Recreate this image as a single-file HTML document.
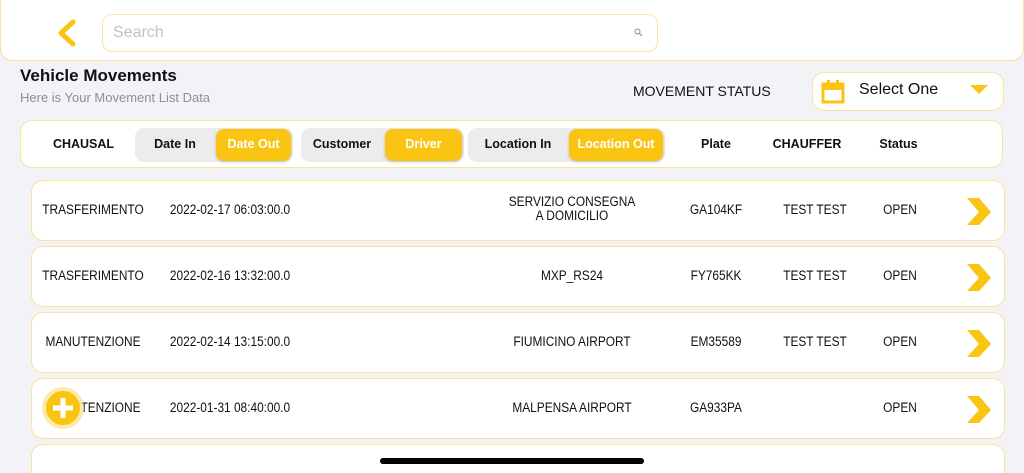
<!DOCTYPE html>
<html style="width:1024px;height:473px;overflow:hidden"><head><meta charset="utf-8"><style>
*{box-sizing:border-box;margin:0;padding:0}
body{width:1024px;height:473px;background:#f2f2f7;font-family:"Liberation Sans",sans-serif;position:relative;overflow:hidden;color:#111}
.a{position:absolute}
.box{position:absolute;background:#fff;border:1.5px solid #fbe39a;border-radius:12px}
.hd{font-size:12.5px;font-weight:bold;position:absolute;top:0;height:100%;display:flex;align-items:center;justify-content:center}
.grp{position:absolute;top:7px;height:34px;background:#ececec;border-radius:9px}
.on{position:absolute;top:8px;height:32px;background:#f9c412;color:#fff;border-radius:8px;box-shadow:0 1px 3px rgba(0,0,0,.2)}
.c{position:absolute;font-size:13.5px;text-align:center;transform:translateX(-50%) scaleX(.88);white-space:nowrap}
</style></head><body>
<div class="box" style="left:0;top:-2px;width:1024px;height:63px;border-radius:0 0 12px 12px"></div>
<svg class="a" style="left:54px;top:18px" width="24" height="30"><path d="M19 4 L7 15 L19 26" fill="none" stroke="#f9c412" stroke-width="5" stroke-linecap="round" stroke-linejoin="round"/></svg>
<div class="box" style="left:102px;top:14px;width:556px;height:38px;border-radius:10px"></div>
<div class="a" style="left:113px;top:24px;font-size:16px;color:#c2c2c6">Search</div>
<svg class="a" style="left:634px;top:28px" width="9" height="9"><circle cx="3.5" cy="3.5" r="2.5" fill="none" stroke="#888" stroke-width="1"/><path d="M5.5 5.5 L8 8" stroke="#888"/></svg>
<div class="a" style="left:20px;top:66px;font-size:17px;font-weight:bold">Vehicle Movements</div>
<div class="a" style="left:20px;top:90px;font-size:13px;color:#8e8e93">Here is Your Movement List Data</div>
<div class="a" style="left:633px;top:83px;font-size:14px">MOVEMENT STATUS</div>
<div class="box" style="left:812px;top:72px;width:192px;height:39px"></div>
<svg class="a" style="left:821px;top:79px" width="24" height="26"><rect x="2" y="5" width="20" height="18" fill="none" stroke="#f9c412" stroke-width="3"/><rect x="2" y="5" width="20" height="6" fill="#f9c412"/><rect x="6" y="1" width="3" height="6" fill="#f9c412"/><rect x="15" y="1" width="3" height="6" fill="#f9c412"/></svg>
<div class="a" style="left:859px;top:81px;font-size:16px">Select One</div>
<svg class="a" style="left:970px;top:85px" width="18" height="10"><path d="M0 0 H18 L9 9Z" fill="#f9c412"/></svg>
<div class="box" style="left:20px;top:120px;width:983px;height:48px">
<div class="hd" style="left:20px;width:85px">CHAUSAL</div>
<div class="grp" style="left:114px;width:158px"></div>
<div class="hd" style="left:114px;width:80px">Date In</div>
<div class="on" style="left:195px;width:75px"></div><div class="hd" style="left:195px;width:75px;color:#fff">Date Out</div>
<div class="grp" style="left:280px;width:163px"></div>
<div class="hd" style="left:280px;width:82px">Customer</div>
<div class="on" style="left:364px;width:77px"></div><div class="hd" style="left:364px;width:77px;color:#fff">Driver</div>
<div class="grp" style="left:447px;width:197px"></div>
<div class="hd" style="left:447px;width:100px">Location In</div>
<div class="on" style="left:548px;width:94px"></div><div class="hd" style="left:548px;width:94px;color:#fff">Location Out</div>
<div class="hd" style="left:655px;width:80px">Plate</div>
<div class="hd" style="left:745px;width:82px">CHAUFFER</div>
<div class="hd" style="left:840px;width:75px">Status</div>
</div>
<!-- rows -->
<div class="box" style="left:31px;top:180px;width:974px;height:61px"></div>
<div class="c" style="left:93px;top:202px">TRASFERIMENTO</div>
<div class="c" style="left:230px;top:202px">2022-02-17 06:03:00.0</div>
<div class="c" style="left:572px;top:195px;line-height:14px">SERVIZIO CONSEGNA<br>A DOMICILIO</div>
<div class="c" style="left:716px;top:202px">GA104KF</div>
<div class="c" style="left:815px;top:202px">TEST TEST</div>
<div class="c" style="left:900px;top:202px">OPEN</div>
<svg class="a" style="left:966px;top:198px" width="26" height="28"><path d="M1 0H13L25 14L13 27H1L13 14Z" fill="#f9c412"/></svg>

<div class="box" style="left:31px;top:246px;width:974px;height:61px"></div>
<div class="c" style="left:93px;top:268px">TRASFERIMENTO</div>
<div class="c" style="left:230px;top:268px">2022-02-16 13:32:00.0</div>
<div class="c" style="left:572px;top:268px">MXP_RS24</div>
<div class="c" style="left:716px;top:268px">FY765KK</div>
<div class="c" style="left:815px;top:268px">TEST TEST</div>
<div class="c" style="left:900px;top:268px">OPEN</div>
<svg class="a" style="left:966px;top:264px" width="26" height="28"><path d="M1 0H13L25 14L13 27H1L13 14Z" fill="#f9c412"/></svg>

<div class="box" style="left:31px;top:312px;width:974px;height:61px"></div>
<div class="c" style="left:93px;top:334px">MANUTENZIONE</div>
<div class="c" style="left:230px;top:334px">2022-02-14 13:15:00.0</div>
<div class="c" style="left:572px;top:334px">FIUMICINO AIRPORT</div>
<div class="c" style="left:716px;top:334px">EM35589</div>
<div class="c" style="left:815px;top:334px">TEST TEST</div>
<div class="c" style="left:900px;top:334px">OPEN</div>
<svg class="a" style="left:966px;top:330px" width="26" height="28"><path d="M1 0H13L25 14L13 27H1L13 14Z" fill="#f9c412"/></svg>

<div class="box" style="left:31px;top:378px;width:974px;height:61px"></div>
<div class="c" style="left:93px;top:400px">MANUTENZIONE</div>
<div class="c" style="left:230px;top:400px">2022-01-31 08:40:00.0</div>
<div class="c" style="left:572px;top:400px">MALPENSA AIRPORT</div>
<div class="c" style="left:716px;top:400px">GA933PA</div>
<div class="c" style="left:900px;top:400px">OPEN</div>
<svg class="a" style="left:966px;top:396px" width="26" height="28"><path d="M1 0H13L25 14L13 27H1L13 14Z" fill="#f9c412"/></svg>
<svg class="a" style="left:41px;top:386px" width="44" height="44"><circle cx="22" cy="22" r="21" fill="#fbe39a" opacity=".8"/><circle cx="22" cy="22" r="17" fill="#f9c412"/><path d="M22 12V32M12 22H32" stroke="#fff" stroke-width="5"/></svg>

<div class="box" style="left:31px;top:444px;width:974px;height:40px;border-bottom:none;border-radius:12px 12px 0 0"></div>
<div class="a" style="left:380px;top:458px;width:264px;height:6px;border-radius:3px;background:#000"></div>
<div class="a" style="left:0;top:465px;width:1024px;height:8px;background:#f2f2f7"></div>
<div class="a" style="left:31px;top:465px;width:974px;height:8px;background:#fff;border-left:1.5px solid #fbe39a;border-right:1.5px solid #fbe39a"></div>
</body></html>
